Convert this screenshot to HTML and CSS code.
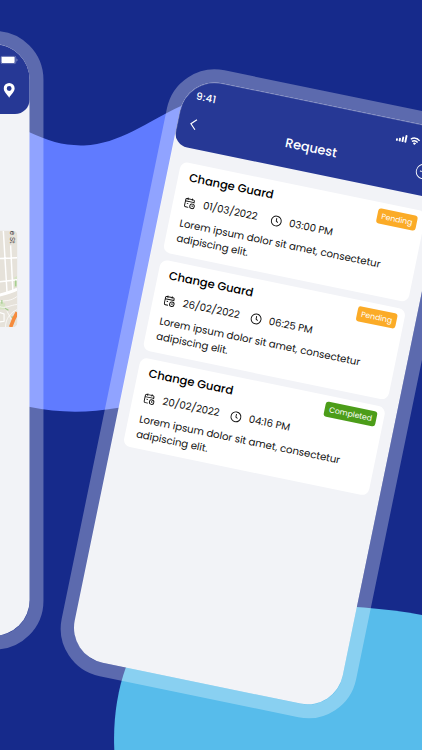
FILE: index.html
```html
<!DOCTYPE html>
<html lang="en">
<head>
    <meta charset="UTF-8">
    <meta name="viewport" content="width=device-width, initial-scale=1.0">
    <title>Change Guard Requests</title>
    <link rel="stylesheet" href="styles.css">
</head>
<body>

    <svg class="icon-defs" width="0" height="0">
        <symbol id="calendar" viewBox="0 0 16 16">
            <path d="M7 14H3.2a1.7 1.7 0 0 1-1.7-1.7V4.2a1.7 1.7 0 0 1 1.7-1.7h8.6a1.7 1.7 0 0 1 1.7 1.7V7M1.5 6h12M4.5 1v3M10.5 1v3"/>
            <circle cx="11.8" cy="11.6" r="3.1"/>
            <path d="M11.8 10.2v1.5l1 .5M4 9h2"/>
        </symbol>
        <symbol id="clock" viewBox="0 0 16 16">
            <circle cx="8" cy="8" r="6.8"/>
            <path d="M8 4v4.2l2.6 1.6"/>
        </symbol>
    </svg>

    <div class="stage">
        <svg class="shapes" viewBox="0 0 422 750">
            <path fill="#607bff" d="M0 118C14 125 22 129 30 132.600C48 141 64 146 84 145.400C120 144 146 122 181 106C215 91 240 90 260 100V330C200 385 150 403 117 408C88 413 58 413 30 407L0 398Z"/>
            <path fill="#57bceb" d="M114.300 750C113 720 117 692 126 667C150 620 220 605 300 605C345 605.500 385 608 422 615V750Z"/>
        </svg>

        <div class="phone phone-left">
            <div class="header">
                <div class="status">
                    <svg class="battery" viewBox="0 0 25 12">
                        <rect x="0.500" y="0.500" width="20.500" height="10.500" rx="2" fill="none" stroke="#fff" stroke-opacity=".4"/>
                        <rect x="1.500" y="1.500" width="18" height="8.500" rx="1" fill="#fff"/>
                        <path d="M22 4v4q1.500-.5 1.500-2T22 4z" fill="#fff" fill-opacity=".4"/>
                    </svg>
                </div>
                <div class="nav">
                    <svg class="pin" viewBox="0 0 16 21">
                        <path fill="#fff" fill-rule="evenodd" d="M8 .3A7.500 7.500 0 0 0 .5 7.800C.5 12.500 5 16 8 20.600C11 16 15.500 12.500 15.500 7.800A7.500 7.500 0 0 0 8 .3ZM8 4.700A3.300 3.300 0 1 1 8 11.300A3.300 3.300 0 0 1 8 4.700Z"/>
                    </svg>
                </div>
            </div>
            <div class="map">
                <svg viewBox="0 0 24 132">
                    <rect width="24" height="132" fill="#e6e2da"/>
                    <path fill="#d6e3c4" d="M20 64l4-2v14l-4 2zM0 96l8 4-2 8H0z"/>
                    <g fill="none" stroke="#fff">
                        <path stroke-width="2" d="M5 0L10 84M15 20l3 62M0 38l24-1M0 70l24-3"/>
                        <path stroke-width="4" d="M0 88C8 86 16 84 24 80"/>
                        <path stroke-width="1" d="M0 97c9-2 14 0 24-7M0 104c8 3 14-2 24-3M8 132c0-12 7-20 16-24M10 110l6 12"/>
                        <path stroke-width="1.500" d="M0 112l6 2v10l-6 1"/>
                    </g>
                    <path stroke="#9cc987" stroke-width="1.500" fill="none" d="M3 95v5M7 106l5 3M16 118l4 1M22 68v8"/>
                    <path stroke="#f68b3d" stroke-width="5" fill="none" d="M24 112q-5 8-9 20"/>
                    <text class="map-label" transform="translate(13.500 0) rotate(90)">e St</text>
                </svg>
            </div>
        </div>

        <div class="phone phone-right">
            <div class="header">
                <div class="status">
                    <span class="time">9:41</span>
                    <svg class="signal" viewBox="0 0 16 12">
                        <g fill="#fff">
                            <rect x="0" y="7.500" width="2.600" height="3.500" rx="1"/>
                            <rect x="4" y="6" width="2.600" height="5" rx="1"/>
                            <rect x="8" y="3.500" width="2.600" height="7.500" rx="1"/>
                            <rect x="12" y="0.500" width="2.600" height="10.500" rx="1"/>
                        </g>
                    </svg>
                    <svg class="wifi" viewBox="0 0 14 11">
                        <g fill="none" stroke="#fff" stroke-width="1.900">
                            <path d="M.8 3.800q6.200-5.400 12.400 0"/>
                            <path d="M3 6.500q4-3.400 8 0"/>
                        </g>
                        <path fill="#fff" d="M4.700 8.300q2.300-1.700 4.600 0L7 10.700z"/>
                    </svg>
                </div>
                <div class="nav">
                    <svg class="back" viewBox="0 0 10 16"><path d="M8.500 1L1.500 8l7 7"/></svg>
                    <h1>Request</h1>
                    <svg class="add" viewBox="0 0 22 22"><circle cx="11" cy="11" r="10"/><path d="M6 11h10M11 6v10"/></svg>
                </div>
            </div>

            <div class="list">
                <div class="card">
                    <h2>Change Guard</h2>
                    <div class="meta">
                        <span class="date"><svg><use href="#calendar"/></svg>01/03/2022</span>
                        <span class="hour"><svg><use href="#clock"/></svg>03:00 PM</span>
                    </div>
                    <p>Lorem ipsum dolor sit amet, consectetur<br>adipiscing elit.</p>
                    <span class="badge pending">Pending</span>
                </div>
                <div class="card">
                    <h2>Change Guard</h2>
                    <div class="meta">
                        <span class="date"><svg><use href="#calendar"/></svg>26/02/2022</span>
                        <span class="hour"><svg><use href="#clock"/></svg>06:25 PM</span>
                    </div>
                    <p>Lorem ipsum dolor sit amet, consectetur<br>adipiscing elit.</p>
                    <span class="badge pending">Pending</span>
                </div>
                <div class="card">
                    <h2>Change Guard</h2>
                    <div class="meta">
                        <span class="date"><svg><use href="#calendar"/></svg>20/02/2022</span>
                        <span class="hour"><svg><use href="#clock"/></svg>04:16 PM</span>
                    </div>
                    <p>Lorem ipsum dolor sit amet, consectetur<br>adipiscing elit.</p>
                    <span class="badge completed">Completed</span>
                </div>
            </div>
        </div>
    </div>

</body>
</html>
```

FILE: styles.css
```css
* {
    box-sizing: border-box;
}

body {
    margin: 0;
    font-family: Poppins, Inter, sans-serif;
    background: #162a8b;
    overflow: hidden;
}

.icon-defs {
    position: absolute;
}

.stage {
    position: relative;
    width: 422px;
    height: 750px;
    overflow: hidden;
    background: #162a8b;
}

.shapes {
    display: block;
    width: 422px;
    height: 750px;
}

/* phones are built at 375x812 and scaled down */
.phone {
    position: absolute;
    width: 375px;
    height: 811px;
    border-radius: 49px;
    background: #f2f3f7;
    transform-origin: 0 0;
}

.phone::before {
    content: "";
    position: absolute;
    inset: -18.5px;
    border: 19.2px solid rgba(255, 255, 255, 0.3);
    border-radius: 67px;
}

.phone-left {
    left: -243.8px;
    top: 43.7px;
    transform: scale(0.7296);
}

.phone-right {
    left: 186.5px;
    top: 75.7px;
    transform: rotate(11.65deg) scale(0.7296);
}

.header {
    height: 96px;
    background: #263895;
    border-radius: 49px 49px 20px 20px;
    color: #fff;
}

.status {
    display: flex;
    align-items: center;
    height: 44px;
    padding: 4px 17px 0 18px;
}

.phone-left .status {
    justify-content: flex-end;
    padding: 0 15px 0 0;
}

.time {
    flex: 1;
    font-size: 14px;
    font-weight: 500;
    letter-spacing: 0.4px;
}

.battery {
    width: 25px;
    height: 12px;
}

.signal {
    width: 16px;
    height: 12px;
    margin-right: 3px;
}

.wifi {
    width: 14px;
    height: 11px;
    margin-right: 27px;
}

.nav {
    display: flex;
    align-items: center;
    justify-content: space-between;
    height: 38px;
    padding: 0 20px 0 17px;
}

.phone-left .nav {
    justify-content: flex-end;
}

.pin {
    width: 16px;
    height: 21px;
}

.back {
    width: 10px;
    height: 16px;
    margin-right: 13px;
    fill: none;
    stroke: #fff;
    stroke-width: 1.6;
}

.add {
    width: 22px;
    height: 22px;
    fill: none;
    stroke: #fff;
    stroke-width: 1.3;
}

h1 {
    margin: 0 0 2px;
    font-size: 17.6px;
    font-weight: 500;
}

.map {
    display: flex;
    justify-content: flex-end;
    height: 132px;
    margin: 160px 17px 0;
    border-radius: 6px;
    overflow: hidden;
    background: #e6e2da;
}

.map svg {
    width: 24px;
    height: 132px;
}

.map-label {
    font-size: 9.5px;
    fill: #444;
}

.list {
    display: flex;
    flex-direction: column;
    gap: 10px;
    padding: 20px 16px;
}

.card {
    position: relative;
    height: 127px;
    padding: 8px 15px;
    border-radius: 10px;
    background: #fff;
    color: #111;
}

.card:last-child {
    height: 124px;
}

h2 {
    margin: 0 0 11px;
    font-size: 15.8px;
    line-height: 24px;
    font-weight: 500;
    color: #000;
}

.meta {
    display: flex;
    font-size: 13.9px;
    line-height: 21px;
}

.meta span {
    display: flex;
    align-items: center;
    gap: 10.5px;
}

.meta svg {
    width: 16px;
    height: 16px;
    fill: none;
    stroke: #111;
    stroke-width: 1.3;
}

.date {
    width: 120.5px;
}

p {
    margin: 8.5px 0 0;
    font-size: 13.95px;
    line-height: 21px;
    white-space: nowrap;
}

.badge {
    position: absolute;
    top: 7.5px;
    right: 10px;
    height: 21px;
    padding: 0 6px;
    border-radius: 4px;
    font-size: 10.6px;
    line-height: 21px;
    font-weight: 400;
    color: #fff;
}

.pending {
    background: #fbab27;
}

.completed {
    background: #4c9d19;
}
```
